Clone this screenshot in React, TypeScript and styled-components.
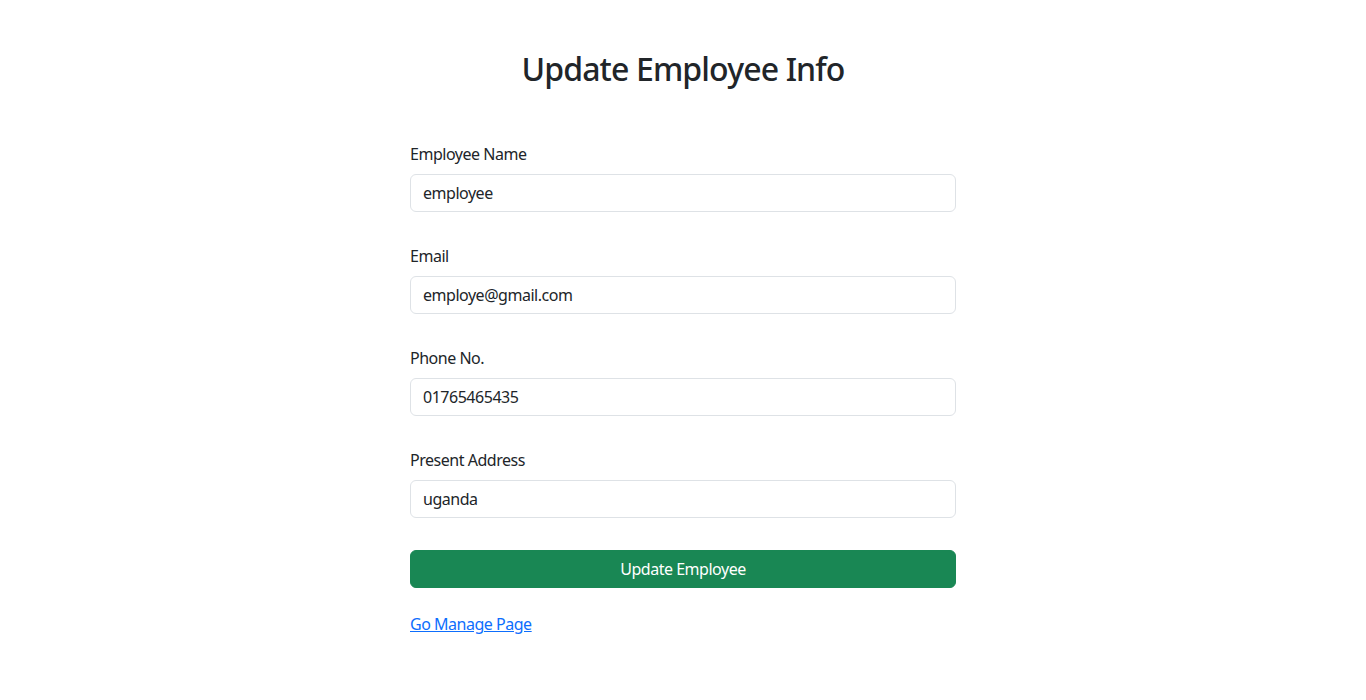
import React from "react";
import styled, { createGlobalStyle } from "styled-components";

const Global = createGlobalStyle`
  * { box-sizing: border-box; }
  body {
    margin: 0;
    background: #fff;
    color: #212529;
    font-family: "Noto Sans", "Segoe UI", sans-serif;
    font-size: 16px;
    line-height: 1.5;
    letter-spacing: -0.03em;
  }
`;

const Page = styled.main`
  display: flex;
  flex-direction: column;
  align-items: center;
  padding-top: 50px;
`;

const Title = styled.h2`
  margin: 0 0 54px;
  font-size: 32px;
  font-weight: 500;
  line-height: 1.2;
  letter-spacing: -0.027em;
  color: #212529;
`;

const Form = styled.form`
  width: 546px;
  display: flex;
  flex-direction: column;
`;

const Group = styled.div`
  display: flex;
  flex-direction: column;
  margin-bottom: 32px;
`;

const Label = styled.label`
  margin-bottom: 8px;
  font-size: 16px;
  line-height: 24px;
`;

const Input = styled.input`
  height: 38px;
  padding: 6px 12px;
  font-family: inherit;
  font-size: 16px;
  line-height: 24px;
  letter-spacing: inherit;
  color: #212529;
  background: #fff;
  border: 1px solid #dee2e6;
  border-radius: 6px;
  outline: none;
`;

const Button = styled.button`
  height: 38px;
  border: 1px solid #198754;
  border-radius: 6px;
  background: #198754;
  color: #fff;
  font-family: inherit;
  font-size: 16px;
  line-height: 24px;
  letter-spacing: inherit;
  cursor: pointer;
`;

const LinkRow = styled.div`
  margin-top: 24px;
`;

const Link = styled.a`
  color: #0d6efd;
  text-decoration: underline;
  font-size: 16px;
`;

const fields = [
  { label: "Employee Name", value: "employee", type: "text" },
  { label: "Email", value: "employe@gmail.com", type: "email" },
  { label: "Phone No.", value: "01765465435", type: "text" },
  { label: "Present Address", value: "uganda", type: "text" },
];

export default function App() {
  return (
    <>
      <Global />
      <Page>
        <Title>Update Employee Info</Title>
        <Form onSubmit={(e) => e.preventDefault()}>
          {fields.map((f) => (
            <Group key={f.label}>
              <Label>{f.label}</Label>
              <Input type={f.type} defaultValue={f.value} />
            </Group>
          ))}
          <Button type="submit">Update Employee</Button>
          <LinkRow>
            <Link href="#">Go Manage Page</Link>
          </LinkRow>
        </Form>
      </Page>
    </>
  );
}
